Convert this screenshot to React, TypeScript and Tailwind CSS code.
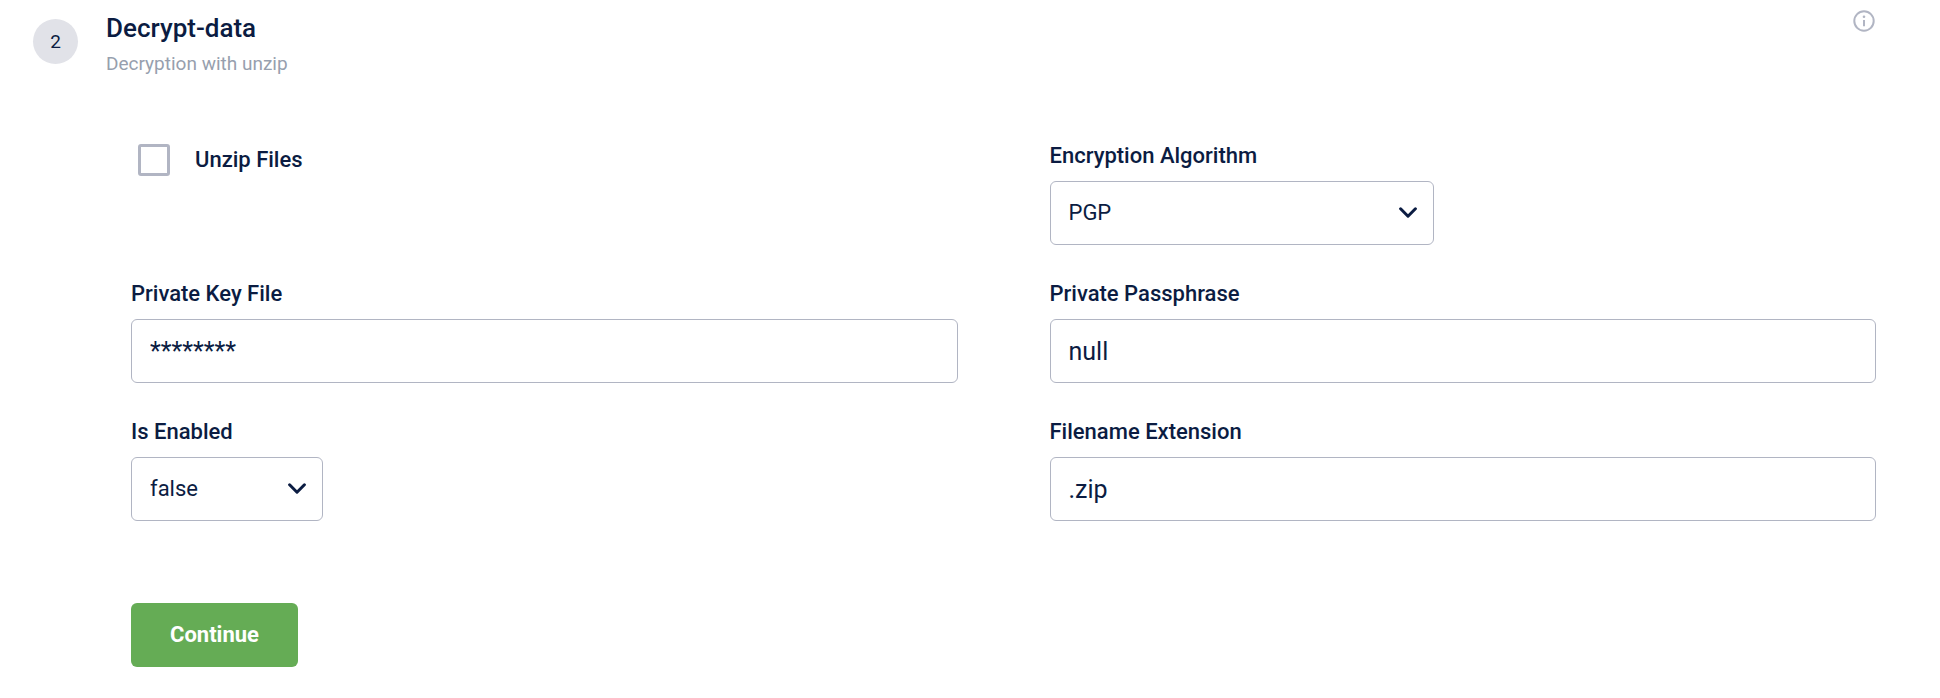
import React from "react";

type FieldProps = {
  id: string;
  label: string;
  children: React.ReactNode;
};

function Field({ id, label, children }: FieldProps) {
  return (
    <div className="flex flex-col items-start gap-2.5">
      <label htmlFor={id} className="text-[22px] leading-[30px] font-medium">
        {label}
      </label>
      {children}
    </div>
  );
}

function TextInput(props: React.InputHTMLAttributes<HTMLInputElement>) {
  return (
    <input
      {...props}
      type="text"
      className="h-16 w-full rounded-md border border-[#b1b5c3] bg-white px-[18px] text-[25px] leading-8 focus:border-[#0b1c42] focus:outline-none"
    />
  );
}

type SelectProps = {
  id: string;
  options: string[];
  value: string;
  wrapperClass: string;
};

function Select({ id, options, value, wrapperClass }: SelectProps) {
  return (
    <div className={`relative max-w-full ${wrapperClass}`}>
      <select
        id={id}
        defaultValue={value}
        className="h-16 w-full appearance-none rounded-md border border-[#b1b5c3] bg-white px-[18px] text-[22px] leading-[30px] focus:border-[#0b1c42] focus:outline-none"
      >
        {options.map((o) => (
          <option key={o}>{o}</option>
        ))}
      </select>
      <svg
        viewBox="0 0 18 11"
        fill="none"
        stroke="currentColor"
        strokeWidth="3"
        strokeLinecap="round"
        strokeLinejoin="round"
        aria-hidden="true"
        className="pointer-events-none absolute top-[26px] right-[17px] h-[11px] w-[18px]"
      >
        <path d="M1.6 1.8 9 9.2l7.4-7.4" />
      </svg>
    </div>
  );
}

function InfoIcon() {
  return (
    <svg viewBox="0 0 22 22" fill="none" stroke="currentColor" strokeWidth="2" aria-hidden="true" className="h-[22px] w-[22px]">
      <circle cx="11" cy="11" r="9.7" />
      <path d="M11 10v6.2" />
      <circle cx="11" cy="6.7" r="1.3" fill="currentColor" stroke="none" />
    </svg>
  );
}

export default function App() {
  return (
    <main className="bg-white pt-3 pr-16 pb-8 pl-[33px] font-['Roboto',sans-serif] text-[#0b1c42]">
      <header className="flex items-start">
        <div className="mt-[7px] flex h-[45px] w-[45px] shrink-0 items-center justify-center rounded-full bg-[#e1e2e8] text-[19px] leading-6">
          2
        </div>
        <div className="ml-7 flex flex-1 flex-col gap-2">
          <h2 className="text-[26px] leading-8 font-medium">Decrypt-data</h2>
          <p className="text-[19px] leading-6 text-[#979fae]">Decryption with unzip</p>
        </div>
        <button type="button" aria-label="Info" className="-mt-0.5 mr-px text-[#b1b5c3]">
          <InfoIcon />
        </button>
      </header>

      <form className="mt-[65px] pl-[98px]" onSubmit={(e) => e.preventDefault()}>
        <div className="grid grid-cols-2 gap-x-[92px] gap-y-[34px]">
          <div className="flex items-start pt-[3px] pl-[7px]">
            <label className="flex items-center gap-[25px] text-[22px] leading-[30px] font-medium">
              <input
                type="checkbox"
                className="h-8 w-8 appearance-none rounded-[3px] border-3 border-[#b1b5c3] bg-white checked:bg-[#65ac55]"
              />
              Unzip Files
            </label>
          </div>
          <Field id="algorithm" label="Encryption Algorithm">
            <Select id="algorithm" options={["PGP", "AES"]} value="PGP" wrapperClass="w-96" />
          </Field>
          <Field id="key-file" label="Private Key File">
            <TextInput id="key-file" defaultValue="********" />
          </Field>
          <Field id="passphrase" label="Private Passphrase">
            <TextInput id="passphrase" defaultValue="null" />
          </Field>
          <Field id="enabled" label="Is Enabled">
            <Select id="enabled" options={["false", "true"]} value="false" wrapperClass="w-48" />
          </Field>
          <Field id="extension" label="Filename Extension">
            <TextInput id="extension" defaultValue=".zip" />
          </Field>
        </div>

        <button type="submit" className="mt-[82px] h-16 rounded-md bg-[#65ac55] px-[39px] text-[22px] leading-[30px] font-bold text-white">
          Continue
        </button>
      </form>
    </main>
  );
}
